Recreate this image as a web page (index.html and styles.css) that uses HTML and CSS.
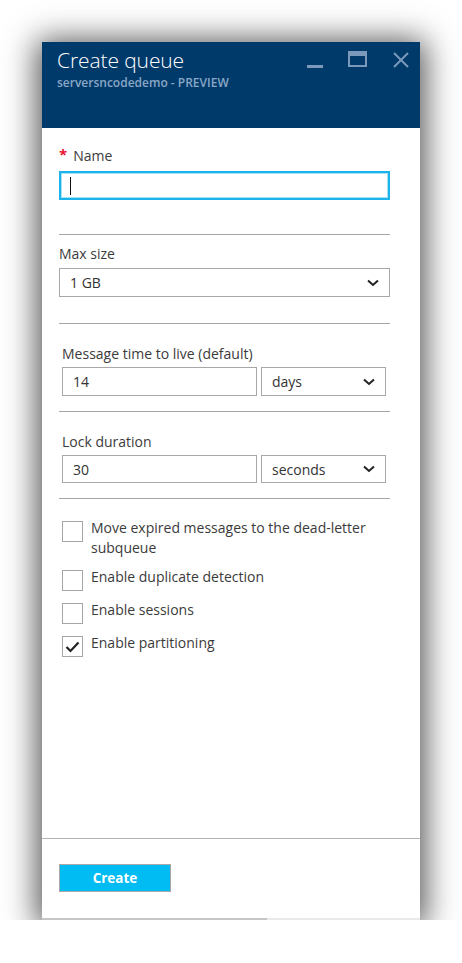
FILE: index.html
```html
<!DOCTYPE html>
<html lang="en">
<head>
<meta charset="utf-8">
<title>Create queue</title>
<link rel="stylesheet" href="styles.css">
</head>
<body>
<div class="blade">
  <header class="blade-head">
    <div class="titles">
      <h1 class="title">Create queue</h1>
      <div class="subtitle">serversncodedemo - PREVIEW</div>
    </div>
    <div class="controls">
      <svg class="ctl ctl-min" width="16" height="16" viewBox="0 0 16 16"><rect x="0" y="12" width="16" height="3" fill="currentColor"/></svg>
      <svg class="ctl ctl-max" width="19" height="16" viewBox="0 0 19 16"><path d="M0 0H19V16H0Z M2 5V14H17V5Z" fill="currentColor" fill-rule="evenodd"/></svg>
      <svg class="ctl ctl-close" width="16" height="16" viewBox="0 0 16 16"><path d="M1 1L15 15M15 1L1 15" stroke="currentColor" stroke-width="2" fill="none"/></svg>
    </div>
  </header>

  <main class="blade-body">
    <section class="group group-name">
      <label class="label"><span class="req">*</span>Name</label>
      <div class="input input-focus"><span class="caret"></span></div>
    </section>

    <section class="group group-size">
      <label class="label">Max size</label>
      <div class="select select-full"><span>1 GB</span>
        <svg class="chev" width="12" height="8" viewBox="0 0 12 8"><path d="M1 1.5L6 6L11 1.5" stroke="#222" stroke-width="2" fill="none"/></svg>
      </div>
    </section>

    <section class="group group-pair">
      <label class="label">Message time to live (default)</label>
      <div class="pair">
        <div class="input input-num">14</div>
        <div class="select select-unit"><span>days</span>
          <svg class="chev" width="12" height="8" viewBox="0 0 12 8"><path d="M1 1.5L6 6L11 1.5" stroke="#222" stroke-width="2" fill="none"/></svg>
        </div>
      </div>
    </section>

    <section class="group group-pair">
      <label class="label">Lock duration</label>
      <div class="pair">
        <div class="input input-num">30</div>
        <div class="select select-unit"><span>seconds</span>
          <svg class="chev" width="12" height="8" viewBox="0 0 12 8"><path d="M1 1.5L6 6L11 1.5" stroke="#222" stroke-width="2" fill="none"/></svg>
        </div>
      </div>
    </section>

    <section class="checks">
      <div class="check-row"><span class="box"></span><span class="check-text">Move expired messages to the dead-letter subqueue</span></div>
      <div class="check-row"><span class="box"></span><span class="check-text">Enable duplicate detection</span></div>
      <div class="check-row"><span class="box"></span><span class="check-text">Enable sessions</span></div>
      <div class="check-row"><span class="box checked"><svg width="15" height="12" viewBox="0 0 15 12"><path d="M1.5 6L5.5 10L13.5 1.5" stroke="#222" stroke-width="2.2" fill="none"/></svg></span><span class="check-text">Enable partitioning</span></div>
    </section>
  </main>

  <footer class="blade-foot">
    <button class="btn-create">Create</button>
  </footer>
  <div class="hscroll"><div class="thumb"></div></div>
</div>
</body>
</html>
```

FILE: styles.css
```css
* { box-sizing: border-box; }

html, body {
  margin: 0;
  padding: 0;
  background: #ffffff;
}

body {
  padding: 42px 42px 0 42px;
  font-family: "Open Sans", "Noto Sans", "Liberation Sans", sans-serif;
  font-size: 14px;
  color: #3b3b3b;
}

.blade {
  width: 378px;
  height: 878px;
  background: #ffffff;
  display: flex;
  flex-direction: column;
  box-shadow: 0 3px 30px 5px rgba(0, 0, 0, 0.68);
}

.blade-head {
  height: 86px;
  flex: none;
  background: #003a6b;
  display: flex;
  justify-content: space-between;
  padding: 4px 11px 0 15px;
}

.title {
  margin: 0;
  font-size: 21px;
  font-weight: 300;
  line-height: 28px;
  color: #ffffff;
  letter-spacing: -0.1px;
}

.subtitle {
  font-size: 12px;
  font-weight: 600;
  color: #8aa7c6;
  line-height: 15px;
  margin-top: 1px;
}

.controls {
  display: flex;
  align-items: flex-start;
  padding-top: 5px;
  color: #7b99ba;
}

.ctl { display: block; }
.ctl-min { margin-right: 25px; margin-top: 2px; }
.ctl-max { margin-right: 26px; }
.ctl-close { margin-top: 1px; }

.blade-body {
  flex: 1;
  padding: 18px 30px 0 17px;
}

.group {
  border-bottom: 1px solid #a6a6a6;
}

.label {
  display: block;
  font-size: 14px;
  line-height: 20px;
  color: #3b3b3b;
}

.req {
  color: #e8112d;
  font-weight: 700;
  font-size: 15px;
  line-height: 1px;
  margin-right: 6px;
  position: relative;
  top: -1px;
}

.group-name .label { margin-bottom: 5px; }
.group-name { padding-bottom: 34px; }

.input, .select {
  height: 29px;
  border: 1px solid #a8a8a8;
  background: #fff;
  display: flex;
  align-items: center;
  padding: 0 10px;
  font-size: 14px;
  color: #333;
}

.input-focus {
  border: 2px solid #1cb3ea;
  box-shadow: inset 0 0 0 1px #a6e1f6;
  padding: 0 9px;
}

.caret {
  display: block;
  width: 1px;
  height: 18px;
  background: #111;
}

.group-size { padding-top: 9px; padding-bottom: 26px; }
.group-size .label { margin-bottom: 4px; }

.select { justify-content: space-between; }
.chev { display: block; }

.group-pair {
  padding: 20px 4px 15px 3px;
}
.group-pair .label { margin-bottom: 3px; }
.group-pair .pair {
  display: grid;
  grid-template-columns: 195px 125px;
  gap: 4px;
}
.group-pair:nth-of-type(4) .input,
.group-pair:nth-of-type(4) .select { height: 28px; }

.checks {
  padding: 19px 0 0 3px;
  display: flex;
  flex-direction: column;
  gap: 9px;
}

.check-row {
  display: flex;
  align-items: flex-start;
  gap: 8px;
}
.check-row:first-child { margin-bottom: 1px; }

.box {
  flex: none;
  width: 21px;
  height: 21px;
  margin-top: 3px;
  border: 1px solid #a6a6a6;
  display: flex;
  align-items: center;
  justify-content: center;
}
.box svg { display: block; margin-top: 1px; }

.check-text {
  font-size: 14px;
  line-height: 20px;
  color: #3b3b3b;
  padding-right: 6px;
}
.check-row:first-child .check-text { line-height: 19.5px; }

.blade-foot {
  flex: none;
  height: 80px;
  border-top: 1px solid #b3b3b3;
  padding: 25px 0 0 17px;
}

.btn-create {
  width: 112px;
  height: 28px;
  background: #00bcf2;
  border: 1px solid #a8a8a8;
  color: #ffffff;
  font-family: "Open Sans", "Noto Sans", sans-serif;
  font-size: 13.5px;
  font-weight: 700;
  padding: 0;
}

.hscroll {
  flex: none;
  height: 2px;
  background: #e9e9e9;
}
.hscroll .thumb {
  width: 225px;
  height: 2px;
  background: #c6c6c6;
}
```
